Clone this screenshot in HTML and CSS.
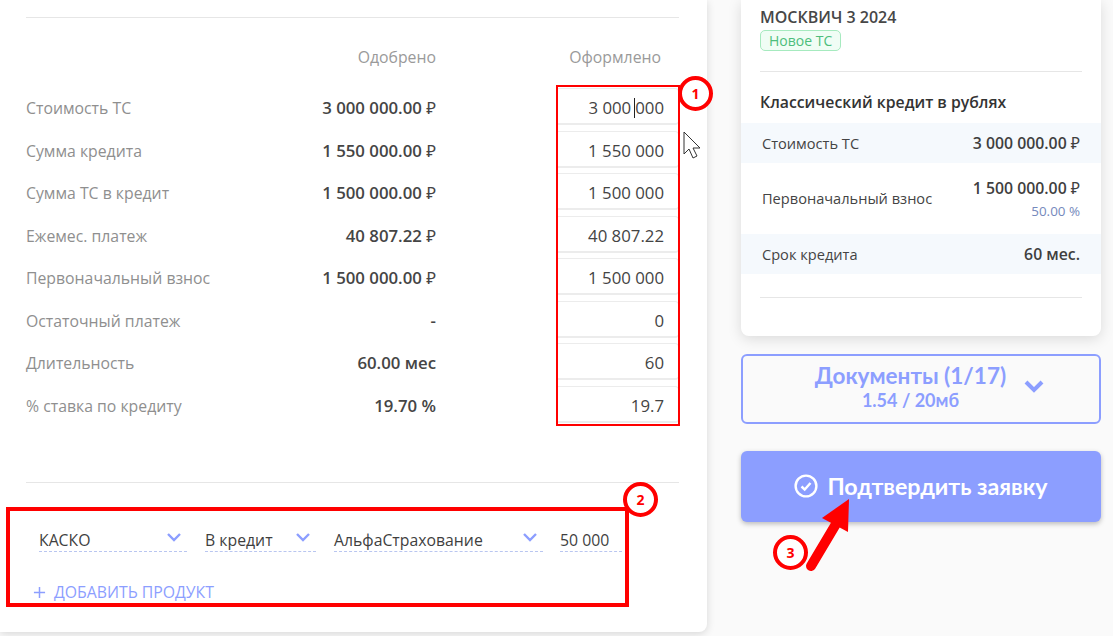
FILE: index.html
```html
<!DOCTYPE html>
<html lang="ru">
<head>
<meta charset="utf-8">
<title>Заявка</title>
<link rel="stylesheet" href="styles.css">
</head>
<body>
<div class="page">
  <main class="left-card">
    <hr class="rule rule-top">
    <div class="grid">
      <div class="head-spacer"></div>
      <div class="head head-a">Одобрено</div>
      <div class="head head-b">Оформлено</div>

      <div class="label">Стоимость ТС</div><div class="val">3 000 000.00 <span class="rub">₽</span></div><div class="inp"><span class="caret-wrap">3 000<i class="caret"></i>000</span></div>
      <div class="label">Сумма кредита</div><div class="val">1 550 000.00 <span class="rub">₽</span></div><div class="inp">1 550 000</div>
      <div class="label">Сумма ТС в кредит</div><div class="val">1 500 000.00 <span class="rub">₽</span></div><div class="inp">1 500 000</div>
      <div class="label">Ежемес. платеж</div><div class="val">40 807.22 <span class="rub">₽</span></div><div class="inp">40 807.22</div>
      <div class="label">Первоначальный взнос</div><div class="val">1 500 000.00 <span class="rub">₽</span></div><div class="inp">1 500 000</div>
      <div class="label">Остаточный платеж</div><div class="val">-</div><div class="inp">0</div>
      <div class="label">Длительность</div><div class="val">60.00 мес</div><div class="inp">60</div>
      <div class="label">% ставка по кредиту</div><div class="val">19.70 %</div><div class="inp">19.7</div>
    </div>
    <hr class="rule rule-bottom">
    <div class="products">
      <div class="field f1"><span>КАСКО</span><svg class="chev" viewBox="0 0 16 10"><path d="M2 2l6 6 6-6"/></svg></div>
      <div class="field f2"><span>В кредит</span><svg class="chev" viewBox="0 0 16 10"><path d="M2 2l6 6 6-6"/></svg></div>
      <div class="field f3"><span>АльфаСтрахование</span><svg class="chev" viewBox="0 0 16 10"><path d="M2 2l6 6 6-6"/></svg></div>
      <div class="field f4"><span>50 000</span></div>
    </div>
    <div class="add"><svg class="plus" viewBox="0 0 14 14"><path d="M7 1v12M1 7h12"/></svg><span>ДОБАВИТЬ ПРОДУКТ</span></div>
  </main>

  <aside class="side">
    <section class="side-card">
      <h2 class="car">МОСКВИЧ 3 2024</h2>
      <div class="badge">Новое ТС</div>
      <hr class="rule side-rule1">
      <h3 class="credit">Классический кредит в рублях</h3>
      <div class="srow shade"><span>Стоимость ТС</span><b>3 000 000.00 <span class="rub">₽</span></b></div>
      <div class="srow tall"><span>Первоначальный взнос</span><div class="stack"><b>1 500 000.00 <span class="rub">₽</span></b><small>50.00 %</small></div></div>
      <div class="srow shade"><span>Срок кредита</span><b>60 мес.</b></div>
      <hr class="rule side-rule2">
    </section>
    <button class="docs" type="button">
      <span class="docs-text"><span class="docs-title">Документы (1/17)</span><span class="docs-sub">1.54 / 20мб</span></span>
      <svg class="docs-chev" viewBox="0 0 22 14"><path d="M3 3l8 8 8-8"/></svg>
    </button>
    <button class="confirm" type="button">
      <svg class="check" viewBox="0 0 24 24"><circle cx="12" cy="12" r="10.4"/><path d="M7.5 12.5l3.2 3 5.8-6.5"/></svg>
      <span>Подтвердить заявку</span>
    </button>
  </aside>

  <div class="mark box1"></div>
  <div class="mark box2"></div>
  <div class="num n1">1</div>
  <div class="num n2">2</div>
  <div class="num n3">3</div>
  <svg class="arrow" viewBox="0 0 60 80"><path class="arrow-line" d="M13 70L38 28"/><path class="arrow-head" d="M51 3L24 22 50 36z"/></svg>
  <svg class="cursor" viewBox="0 0 18 30"><path d="M1 1v22l5-5 4 9 4-2-4-8h7z"/></svg>
</div>
</body>
</html>
```
FILE: styles.css
```css
* { box-sizing: border-box; }
html, body { margin: 0; padding: 0; height: 100%; }
body { background: #fafafa; font-family: "Open Sans", "Noto Sans", sans-serif; color: #3f3f3f; overflow: hidden; }
.page { position: relative; width: 1113px; height: 636px; display: flex; align-items: flex-start; overflow: hidden; }

.rule { border: 0; height: 1px; background: #e6e6e6; margin: 0; }

.left-card { width: 707px; height: 632px; background: #fff; padding: 17px 28px 0 26px; border-radius: 0 0 8px 0; box-shadow: 0 2px 8px rgba(0,0,0,.14); flex: none; }

.grid { display: grid; grid-template-columns: 210px 200px 243px; grid-template-rows: 69px repeat(8, 42.5px); }
.head { font-size: 15.8px; color: #9a9a9a; text-align: right; align-self: end; padding-bottom: 20px; line-height: 20px; }
.head-b { padding-right: 18px; }
.label { font-size: 15.8px; color: #8f8f8f; line-height: 20px; align-self: center; white-space: nowrap; }
.val { font-size: 16.8px; font-weight: 600; color: #454545; text-align: right; align-self: center; line-height: 20px; white-space: nowrap; }
.rub { font-family: "Noto Sans", sans-serif; font-weight: 400; }
.inp { font-size: 16.8px; color: #444; height: 37px; width: 122px; margin-top: 1px; align-self: start; justify-self: end; text-align: right; padding-right: 14px; line-height: 37px; border: 1px solid #ececec; border-bottom-width: 2px; border-left: 0; border-radius: 0 4px 4px 0; white-space: nowrap; }
.caret { display: inline-block; width: 1px; height: 20px; background: #222; vertical-align: -4px; margin-left: 3px; }

.rule-bottom { margin-top: 55px; }
.products { display: flex; margin-top: 41px; padding-left: 13px; height: 28px; }
.field { position: relative; height: 28px; font-size: 15.8px; line-height: 32px; color: #3f3f3f; border-bottom: 1px dashed #b9c6f0; white-space: nowrap; }
.f1 { width: 148px; margin-right: 18px; }
.f2 { width: 111px; margin-right: 18px; }
.f3 { width: 209px; margin-right: 17px; }
.f4 { width: 62px; }
.chev { position: absolute; right: 5px; top: 8px; width: 16px; height: 10px; fill: none; stroke: #8c9eff; stroke-width: 2.4; }
.add { display: flex; align-items: center; margin-top: 29px; padding-left: 7px; font-size: 15.8px; line-height: 22px; color: #8c9eff; }
.plus { width: 13px; height: 13px; margin-right: 8px; fill: none; stroke: #8c9eff; stroke-width: 1.6; }

.side { width: 360px; margin-left: 34px; display: flex; flex-direction: column; flex: none; }
.side-card { height: 336px; background: #fff; border-radius: 0 0 8px 8px; box-shadow: 0 3px 14px rgba(0,0,0,.13); padding: 7px 19px 0; }
.car { font-size: 16px; font-weight: 600; line-height: 20px; margin: 0; color: #474747; }
.badge { display: inline-block; font-size: 14px; line-height: 19px; height: 21px; margin-top: 3px; padding: 0 8px; color: #4dbd7c; background: #f0fdf5; border: 1px solid #a6eabf; border-radius: 5px; font-weight: 500; }
.side-rule1 { margin-top: 20px; }
.credit { font-size: 15.8px; font-weight: 600; line-height: 20px; margin: 20px 0 11px; color: #333; }
.srow { margin: 0 -19px; padding: 0 21px 1px; display: flex; justify-content: space-between; align-items: center; font-size: 14.6px; color: #444; }
.srow b { font-size: 15.8px; font-weight: 600; color: #3f3f3f; }
.shade { height: 40px; background: #f5f9fd; }
.tall { height: 71px; }
.stack { display: flex; flex-direction: column; align-items: flex-end; gap: 3px; }
.stack small { font-size: 13.4px; color: #7589bc; line-height: 18px; }
.side-rule2 { margin-top: 23px; }

.docs { margin-top: 18px; height: 70px; width: 360px; background: transparent; border: 2px solid #8c9eff; border-radius: 6px; display: flex; align-items: center; justify-content: center; gap: 17px; padding: 0 0 6px 18px; font-family: Lato, "Open Sans", sans-serif; color: #8c9eff; }
.docs-text { display: flex; flex-direction: column; align-items: center; }
.docs-title { font-size: 22.5px; font-weight: 700; line-height: 28px; }
.docs-sub { font-size: 18px; font-weight: 700; line-height: 20px; }
.docs-chev { width: 22px; height: 14px; fill: none; stroke: #8c9eff; stroke-width: 4; }
.confirm { margin-top: 27px; height: 71px; width: 360px; background: #8c9eff; border: 0; border-radius: 6px; box-shadow: 0 2px 5px rgba(0,0,0,.25); display: flex; align-items: center; justify-content: center; gap: 9px; padding: 0 0 2px; color: #fff; font-family: Lato, "Open Sans", sans-serif; font-size: 23.2px; font-weight: 700; }
.check { width: 24px; height: 24px; fill: none; stroke: #fff; stroke-width: 2.4; }

.mark { position: absolute; border-style: solid; border-color: #f00; }
.box1 { left: 556px; top: 85px; width: 124px; height: 341px; border-width: 2px; }
.box2 { left: 6px; top: 507px; width: 623px; height: 100px; border-width: 4px; }
.num { position: absolute; width: 35px; height: 35px; border-radius: 50%; border: 4px solid #f00; background: #fff; color: #f00; font-family: "Open Sans", sans-serif; font-size: 14px; font-weight: 700; text-align: center; line-height: 27px; }
.n1 { left: 678px; top: 76px; }
.n2 { left: 623px; top: 482px; }
.n3 { left: 773px; top: 535px; }
.arrow { position: absolute; left: 798px; top: 496px; width: 60px; height: 80px; }
.arrow-line { stroke: #f00; stroke-width: 10; stroke-linecap: round; fill: none; }
.arrow-head { fill: #f00; }
.cursor { position: absolute; left: 683px; top: 131px; width: 18px; height: 30px; }
.cursor path { fill: #fff; stroke: #333; stroke-width: 1; }
```
